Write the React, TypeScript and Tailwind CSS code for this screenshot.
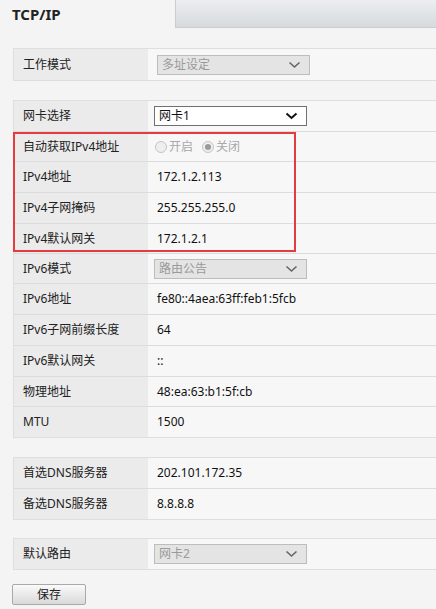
import React from "react";

const font = { fontFamily: '"Noto Sans", "Noto Sans CJK SC", sans-serif' };

function Chevron({ dark }: { dark?: boolean }) {
  return (
    <svg width="13" height="8" viewBox="0 0 13 8" className="shrink-0">
      <path
        d="M1.5 1.5 L6.5 6 L11.5 1.5"
        fill="none"
        stroke={dark ? "#111" : "#666"}
        strokeWidth={dark ? 2 : 1.6}
      />
    </svg>
  );
}

function Select({ text, enabled, w }: { text: string; enabled?: boolean; w: number }) {
  return (
    <div
      className={
        "flex items-center justify-between h-[20px] pl-[4px] pr-[8px] border text-[12px] " +
        (enabled
          ? "bg-white border-[#707070] text-[#111]"
          : "bg-[#e4e4e4] border-[#bdbdbd] text-[#9a9a9a]")
      }
      style={{ width: w }}
    >
      <span className="leading-none">{text}</span>
      <Chevron dark={enabled} />
    </div>
  );
}

function Row({
  label,
  h,
  children,
  last,
}: {
  label: string;
  h: number;
  children?: React.ReactNode;
  last?: boolean;
}) {
  return (
    <div
      className={"flex box-border " + (last ? "" : "border-b border-[#dcdcdc]")}
      style={{ height: h }}
    >
      <div className="w-[134px] shrink-0 bg-[#ebebeb] flex items-center pl-[9px] text-[12px] text-[#222]">
        {label}
      </div>
      <div className="flex-1 bg-[#f7f7f7] flex items-center pl-[9px] text-[12px] text-[#111]">
        {children}
      </div>
    </div>
  );
}

function Section({ children, className }: { children: React.ReactNode; className?: string }) {
  return (
    <div
      className={
        "ml-[13px] border-l border-t border-b border-[#dedede] " + (className || "")
      }
    >
      {children}
    </div>
  );
}

function Radio({ checked, label }: { checked?: boolean; label: string }) {
  return (
    <div className="flex items-center gap-[2px] text-[#a8a8a8] text-[12px]">
      <span className="w-[12px] h-[12px] rounded-full border border-[#c4c4c4] bg-[#eeeeee] flex items-center justify-center">
        {checked && <span className="w-[6px] h-[6px] rounded-full bg-[#9a9a9a]" />}
      </span>
      <span>{label}</span>
    </div>
  );
}

export default function App() {
  return (
    <div className="w-[436px] h-[609px] bg-[#f4f4f4] overflow-hidden" style={font}>
      <div className="flex h-[28px]">
        <div className="w-[175px] pl-[12px] pt-[3px] text-[15px] font-bold text-[#222]">
          TCP/IP
        </div>
        <div className="flex-1 border-l border-b border-[#c9cdd1] bg-gradient-to-b from-[#eceef0] to-[#d6dadd]" />
      </div>

      <Section className="mt-[20px]">
        <Row label="工作模式" h={31} last>
          <Select text="多址设定" w={153} />
        </Row>
      </Section>

      <Section className="mt-[19px]">
        <Row label="网卡选择" h={31}>
          <div className="-ml-[3px]">
            <Select text="网卡1" enabled w={153} />
          </div>
        </Row>
        <div className="relative">
          <Row label="自动获取IPv4地址" h={30}>
            <div className="flex gap-[9px] -ml-[2px]">
              <Radio label="开启" />
              <Radio label="关闭" checked />
            </div>
          </Row>
          <Row label="IPv4地址" h={31}>
            172.1.2.113
          </Row>
          <Row label="IPv4子网掩码" h={31}>
            255.255.255.0
          </Row>
          <Row label="IPv4默认网关" h={30}>
            172.1.2.1
          </Row>
          <div className="absolute left-[-1px] top-[0px] w-[283px] h-[120px] border-2 border-[#e63a40] pointer-events-none" />
        </div>
        <Row label="IPv6模式" h={30}>
          <div className="-ml-[3px]">
            <Select text="路由公告" w={153} />
          </div>
        </Row>
        <Row label="IPv6地址" h={31}>
          fe80::4aea:63ff:feb1:5fcb
        </Row>
        <Row label="IPv6子网前缀长度" h={31}>
          64
        </Row>
        <Row label="IPv6默认网关" h={31}>
          ::
        </Row>
        <Row label="物理地址" h={30}>
          48:ea:63:b1:5f:cb
        </Row>
        <Row label="MTU" h={30} last>
          1500
        </Row>
      </Section>

      <Section className="mt-[19px]">
        <Row label="首选DNS服务器" h={31}>
          202.101.172.35
        </Row>
        <Row label="备选DNS服务器" h={30} last>
          8.8.8.8
        </Row>
      </Section>

      <Section className="mt-[18px]">
        <Row label="默认路由" h={30} last>
          <div className="-ml-[3px]">
            <Select text="网卡2" w={153} />
          </div>
        </Row>
      </Section>

      <div className="pl-[12px] mt-[14px]">
        <button className="w-[74px] h-[21px] border border-[#a9a9a9] rounded-[2px] bg-gradient-to-b from-[#fafafa] to-[#d9d9d9] text-[12px] text-[#222] flex items-center justify-center">
          保存
        </button>
      </div>
    </div>
  );
}
